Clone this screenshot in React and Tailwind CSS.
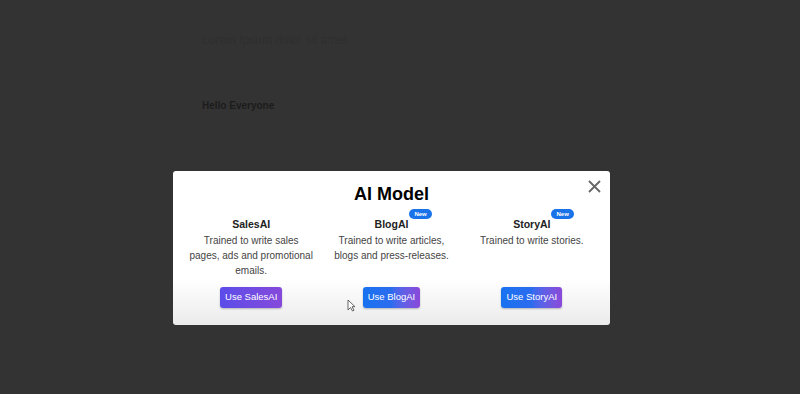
import React from "react";

function Badge() {
  return (
    <span className="absolute left-full top-[-8px] ml-[1px] rounded-full bg-[#1a73e8] px-[5px] text-[6px] leading-[10px] text-white">
      New
    </span>
  );
}

function Column({ title, lines, button, isNew, gradient }) {
  return (
    <div className="flex flex-col items-center text-center">
      <div className="relative text-[10.5px] font-bold leading-[14px] text-[#222]">
        {title}
        {isNew && <Badge />}
      </div>
      <div className="mt-[2px] h-[45px] text-[10px] leading-[15px] text-[#444]">
        {lines.map((l) => (
          <div key={l}>{l}</div>
        ))}
      </div>
      <button
        className={`mt-[9px] h-[21px] rounded-[3px] px-[5px] text-[9.5px] text-white shadow-[0_1px_2px_rgba(0,0,0,0.25)] ${gradient}`}
      >
        {button}
      </button>
    </div>
  );
}

export default function App() {
  return (
    <div
      className="relative h-[394px] w-[800px] overflow-hidden bg-[#333333]"
      style={{ fontFamily: '"Liberation Sans", Arial, sans-serif' }}
    >
      <div className="pl-[202px] pt-[33px]">
        <div className="text-[12px] leading-[14px] text-[#2f2f2f]">
          Lorem Ipsum dolor sit amet
        </div>
        <div className="mt-[53px] text-[10px] font-bold leading-[12px] text-[#1c1c1c]">
          Hello Everyone
        </div>
      </div>

      {/* modal */}
      <div className="absolute left-[173px] top-[171px] w-[437px] rounded-[3px] bg-gradient-to-b from-white via-white via-70% to-[#ebebeb] px-[8px] pb-[17px] pt-[11px]">
        <button className="absolute right-[9px] top-[9px] text-[#666]">
          <svg width="13" height="13" viewBox="0 0 13 13" fill="none" stroke="currentColor" strokeWidth="1.8">
            <path d="M1 1l11 11M12 1L1 12" />
          </svg>
        </button>
        <h1 className="text-center text-[18px] font-bold leading-[24px] text-black">
          AI Model
        </h1>
        <div className="mt-[11px] grid grid-cols-3">
          <Column
            title="SalesAI"
            lines={["Trained to write sales", "pages, ads and promotional", "emails."]}
            button="Use SalesAI"
            gradient="bg-gradient-to-r from-[#5a4ce9] to-[#8549db]"
          />
          <Column
            title="BlogAI"
            isNew
            lines={["Trained to write articles,", "blogs and press-releases."]}
            button="Use BlogAI"
            gradient="bg-gradient-to-r from-[#1872f0] via-[#2b6cef] to-[#8a48d9]"
          />
          <Column
            title="StoryAI"
            isNew
            lines={["Trained to write stories."]}
            button="Use StoryAI"
            gradient="bg-gradient-to-r from-[#1872f0] via-[#2b6cef] to-[#8a48d9]"
          />
        </div>
        {/* cursor */}
        <svg className="absolute left-[174px] top-[128px]" width="9" height="13" viewBox="0 0 9 13">
          <path d="M1 1v10l2.5-2.5L5.5 12l1.5-.7-2-3.6H8z" fill="#fff" stroke="#555" strokeWidth="0.9" />
        </svg>
      </div>
    </div>
  );
}
